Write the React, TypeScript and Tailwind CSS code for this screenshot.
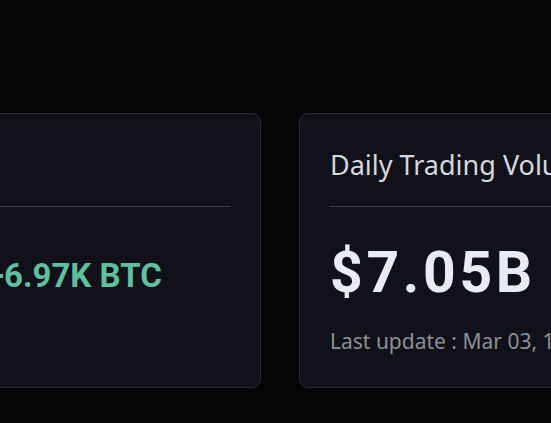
export default function App() {
    return (
        <div className="w-[551px] h-[423px] overflow-hidden bg-[#060609]" style={{ fontFamily: "Roboto, 'Noto Sans', sans-serif" }}>
            <div className="flex gap-[38px] -ml-[39px] pt-[113px]">
                {/* net flow card */}
                <div className="shrink-0 w-[300px] h-[275px] rounded-[9px] border border-[#2a2c33] bg-[#111219] px-[30px] flex flex-col">
                    <div className="h-[92px]" />
                    <div className="h-px bg-[#3a3d45]" />
                    <div className="mt-[52px] -ml-[6px] whitespace-nowrap text-[33px] leading-none font-bold text-[#5fbfa0]">
                        +6.97K BTC
                    </div>
                </div>

                {/* daily volume card */}
                <div className="shrink-0 w-[300px] h-[275px] rounded-[9px] border border-[#2a2c33] bg-[#111219] px-[30px] flex flex-col">
                    <div className="h-[92px] flex items-center pt-[10px] whitespace-nowrap text-[27px] text-[#d5d8de]" style={{ fontFamily: "'Noto Sans', sans-serif" }}>
                        Daily Trading Volume
                    </div>
                    <div className="h-px bg-[#3a3d45]" />
                    <div className="mt-[37px] whitespace-nowrap text-[57px] leading-none font-bold text-[#e8ebf0] tracking-[0.065em]">
                        $7.05B
                    </div>
                    <div className="mt-[25px] whitespace-nowrap text-[21px] text-[#8b8f98]" style={{ fontFamily: "'Noto Sans', sans-serif" }}>
                        Last update : Mar 03, 12:00 (UTC)
                    </div>
                </div>
            </div>
        </div>
    );
}
